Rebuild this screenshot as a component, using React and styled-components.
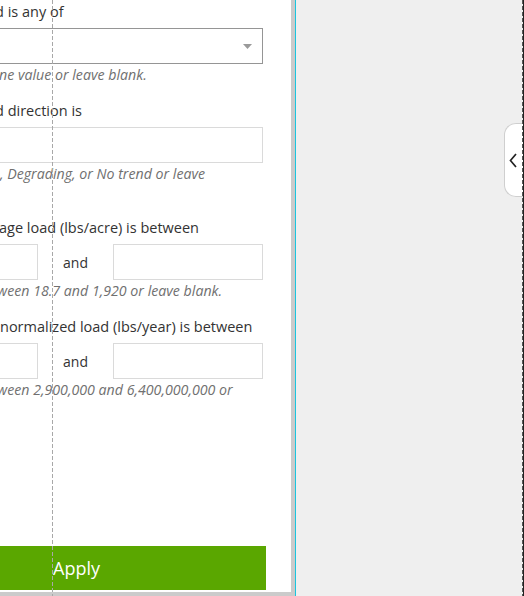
import styled, { createGlobalStyle } from "styled-components";

const GlobalStyle = createGlobalStyle`
  html, body {
    margin: 0;
    padding: 0;
    background: #efefef;
  }
  body {
    font-family: "Open Sans", Lato, sans-serif;
  }
`;

const Page = styled.div`
  position: relative;
  display: flex;
  width: 524px;
  height: 596px;
  overflow: hidden;
  background: #efefef;
`;

const Panel = styled.aside`
  flex-shrink: 0;
  display: flex;
  flex-direction: column;
  width: 295px;
  height: 596px;
  box-sizing: border-box;
  background: #fff;
  border-right: 4px solid #cbcbcb;
  border-bottom: 4px solid #cbcbcb;
  overflow: hidden;
`;

// form is scrolled sideways inside the panel, so its left part is cut off
const Form = styled.div`
  display: flex;
  flex-direction: column;
  width: 376px;
  margin-left: -113px;
  padding-top: 3px;
`;

const Field = styled.div`
  display: flex;
  flex-direction: column;
  margin-bottom: 18px;
`;

const Label = styled.div`
  margin-left: ${({ $cut = 0 }) => 113 - $cut}px;
  font-size: 14.5px;
  line-height: 18px;
  color: #333;
  white-space: nowrap;
`;

const Hint = styled(Label)`
  margin-top: 2px;
  min-height: ${({ $lines = 1 }) => $lines * 18}px;
  font-size: 14.2px;
  font-style: italic;
  color: #707070;
`;

const SelectBox = styled.div`
  display: flex;
  align-items: center;
  justify-content: flex-end;
  height: 36px;
  margin-top: 7px;
  padding-right: 10px;
  box-sizing: border-box;
  border: 1px solid #959595;
  background: #fff;
`;

const TextBox = styled.div`
  height: 36px;
  box-sizing: border-box;
  border: 1px solid #dadada;
  background: #fff;
`;

const InputRow = styled.div`
  margin-top: 7px;
`;

const RangeRow = styled.div`
  display: grid;
  grid-template-columns: 151px 75px 150px;
  align-items: center;
  margin-top: 7px;
`;

const And = styled.span`
  text-align: center;
  font-size: 14px;
  color: #333;
`;

const ApplyButton = styled.button`
  flex-shrink: 0;
  width: 379px;
  height: 44px;
  margin: auto 0 2px -113px;
  border: none;
  background: #5aa700;
  color: #fff;
  font-family: "Open Sans", Lato, sans-serif;
  font-size: 18px;
  padding: 0;
`;

const MapArea = styled.main`
  position: relative;
  flex: 1;
  border-left: 1px solid #1bc5de;
`;

const CollapseTab = styled.button`
  position: absolute;
  right: 0;
  top: 123px;
  width: 20px;
  height: 74px;
  padding: 0 0 0 4px;
  box-sizing: border-box;
  display: flex;
  align-items: center;
  background: #fff;
  border: 1px solid #cfcfcf;
  border-right: none;
  border-radius: 12px 0 0 12px;
`;

const Guide = styled.div`
  position: absolute;
  top: 0;
  bottom: 0;
  left: ${({ $x }) => $x}px;
  width: 1px;
  background: repeating-linear-gradient(
    to bottom,
    ${({ $color }) => $color} 0 4px,
    transparent 4px 6px
  );
`;

const Edge = styled.div`
  position: absolute;
  top: 0;
  bottom: 0;
  right: 0;
  width: 1px;
  background: #222;
`;

const Caret = () => (
  <svg width="9" height="5" viewBox="0 0 9 5">
    <path d="M0 0h9L4.5 5z" fill="#9a9a9a" />
  </svg>
);

const Chevron = () => (
  <svg width="9" height="15" viewBox="0 0 9 15">
    <path d="M7 1L1.5 7.5 7 14" fill="none" stroke="#222" strokeWidth="1.7" />
  </svg>
);

const RangeField = ({ label, hint, cut, hintCut, lines }) => (
  <Field>
    <Label $cut={cut}>{label}</Label>
    <RangeRow>
      <TextBox />
      <And>and</And>
      <TextBox />
    </RangeRow>
    <Hint $cut={hintCut} $lines={lines}>{hint}</Hint>
  </Field>
);

export default function App() {
  return (
    <>
      <GlobalStyle />
      <Page>
        <Panel>
          <Form>
            <Field>
              <Label $cut={5}>d is any of</Label>
              <SelectBox>
                <Caret />
              </SelectBox>
              <Hint $cut={1}>ne value or leave blank.</Hint>
            </Field>
            <Field>
              <Label $cut={5}>d direction is</Label>
              <InputRow>
                <TextBox />
              </InputRow>
              <Hint $cut={0} $lines={2}>, Degrading, or No trend or leave</Hint>
            </Field>
            <RangeField
              label="age load (lbs/acre) is between"
              hint="ween 18.7 and 1,920 or leave blank."
              cut={1}
              hintCut={3}
            />
            <RangeField
              label="normalized load (lbs/year) is between"
              hint="ween 2,900,000 and 6,400,000,000 or"
              cut={0}
              hintCut={3}
              lines={2}
            />
          </Form>
          <ApplyButton>Apply</ApplyButton>
        </Panel>
        <MapArea>
          <CollapseTab>
            <Chevron />
          </CollapseTab>
        </MapArea>
        <Guide $x={52} $color="#a8a8a8" />
        <Guide $x={522} $color="#555" />
        <Edge />
      </Page>
    </>
  );
}
